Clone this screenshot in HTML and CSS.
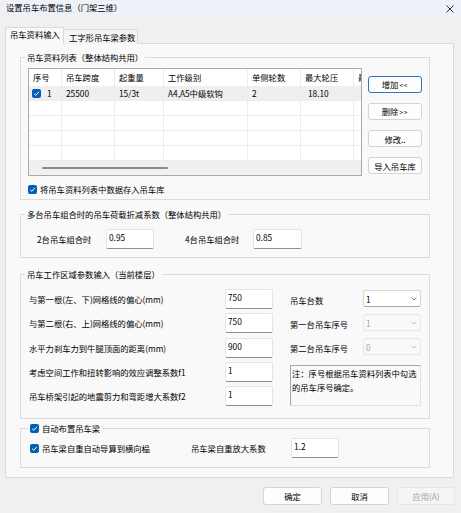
FILE: index.html
```html
<!DOCTYPE html>
<html lang="zh-CN">
<head>
<meta charset="utf-8">
<title>设置吊车布置信息</title>
<link rel="stylesheet" href="styles.css">
</head>
<body>
<div class="titlebar">
  <span class="title">设置吊车布置信息（门架三维）</span>
  <svg class="close" width="8" height="8" viewBox="0 0 8 8"><path d="M0.5 0.5 L7.5 7.5 M7.5 0.5 L0.5 7.5" stroke="#1a1a1a" stroke-width="0.9" fill="none"/></svg>
</div>
<div class="tabs">
  <div class="tab active">吊车资料输入</div>
  <div class="tab second">工字形吊车梁参数</div>
</div>
<div class="panel">
  <fieldset class="group g1">
    <legend>吊车资料列表（整体结构共用）</legend>
    <div class="list-row">
      <div class="grid">
        <div class="row head">
          <div class="cell c1">序号</div><div class="cell c2">吊车跨度</div><div class="cell c3">起重量</div><div class="cell c4">工作级别</div><div class="cell c5">单侧轮数</div><div class="cell c6">最大轮压</div><div class="cell c7">最小轮压</div>
        </div>
        <div class="row sel-row">
          <div class="cell c1 first"><svg class="cb" width="9" height="9" viewBox="0 0 9 9"><rect width="9" height="9" rx="2" fill="#005fb8"/><path d="M2.1 4.7 L3.8 6.3 L6.9 2.8" stroke="#fff" stroke-width="1" fill="none"/></svg><span>1</span></div><div class="cell c2">25500</div><div class="cell c3">15/3t</div><div class="cell c4">A4,A5中级软钩</div><div class="cell c5">2</div><div class="cell c6 num">18.10</div><div class="cell c7"></div>
        </div>
        <div class="row"><div class="cell c1"></div><div class="cell c2"></div><div class="cell c3"></div><div class="cell c4"></div><div class="cell c5"></div><div class="cell c6"></div><div class="cell c7"></div></div>
        <div class="row"><div class="cell c1"></div><div class="cell c2"></div><div class="cell c3"></div><div class="cell c4"></div><div class="cell c5"></div><div class="cell c6"></div><div class="cell c7"></div></div>
        <div class="row"><div class="cell c1"></div><div class="cell c2"></div><div class="cell c3"></div><div class="cell c4"></div><div class="cell c5"></div><div class="cell c6"></div><div class="cell c7"></div></div>
        <div class="row"><div class="cell c1"></div><div class="cell c2"></div><div class="cell c3"></div><div class="cell c4"></div><div class="cell c5"></div><div class="cell c6"></div><div class="cell c7"></div></div>
        <div class="hscroll"><div class="thumb"></div></div>
      </div>
      <div class="side">
        <div class="btn focus"><span class="btxt">增加<span class="arr">&lt;&lt;</span></span></div>
        <div class="btn"><span class="btxt">删除<span class="arr">&gt;&gt;</span></span></div>
        <div class="btn"><span class="btxt">修改..</span></div>
        <div class="btn"><span class="btxt">导入吊车库</span></div>
      </div>
    </div>
    <div class="check store">
      <svg class="cb" width="9" height="9" viewBox="0 0 9 9"><rect width="9" height="9" rx="2" fill="#005fb8"/><path d="M2.1 4.7 L3.8 6.3 L6.9 2.8" stroke="#fff" stroke-width="1" fill="none"/></svg>
      <span>将吊车资料列表中数据存入吊车库</span>
    </div>
  </fieldset>

  <fieldset class="group g2">
    <legend>多台吊车组合时的吊车荷载折减系数（整体结构共用）</legend>
    <div class="g2row">
      <span class="lbl2">2台吊车组合时</span>
      <div class="tb w48">0.95</div>
      <span class="lbl4">4台吊车组合时</span>
      <div class="tb w49">0.85</div>
    </div>
  </fieldset>

  <fieldset class="group g3">
    <legend>吊车工作区域参数输入（当前楼层）</legend>
    <div class="g3body">
      <div class="col-left">
        <div class="frow"><span>与第一根(左、下)网格线的偏心(mm)</span><div class="tb w48">750</div></div>
        <div class="frow"><span>与第二根(右、上)网格线的偏心(mm)</span><div class="tb w48">750</div></div>
        <div class="frow"><span>水平力刹车力到牛腿顶面的距离(mm)</span><div class="tb w48">900</div></div>
        <div class="frow"><span>考虑空间工作和扭转影响的效应调整系数f1</span><div class="tb w48">1</div></div>
        <div class="frow"><span>吊车桥架引起的地震剪力和弯距增大系数f2</span><div class="tb w48">1</div></div>
      </div>
      <div class="col-right">
        <div class="srow"><span class="slbl">吊车台数</span><div class="sel"><span>1</span><svg width="6" height="4" viewBox="0 0 6 4"><path d="M0.5 0.5 L3 3 L5.5 0.5" stroke="#5a5a5a" stroke-width="0.8" fill="none"/></svg></div></div>
        <div class="srow"><span class="slbl">第一台吊车序号</span><div class="sel disabled"><span>1</span><svg width="6" height="4" viewBox="0 0 6 4"><path d="M0.5 0.5 L3 3 L5.5 0.5" stroke="#b5b5b5" stroke-width="0.8" fill="none"/></svg></div></div>
        <div class="srow"><span class="slbl">第二台吊车序号</span><div class="sel disabled"><span>0</span><svg width="6" height="4" viewBox="0 0 6 4"><path d="M0.5 0.5 L3 3 L5.5 0.5" stroke="#b5b5b5" stroke-width="0.8" fill="none"/></svg></div></div>
        <div class="note">注：序号根据吊车资料列表中勾选的吊车序号确定。</div>
      </div>
    </div>
  </fieldset>

  <fieldset class="group g4">
    <legend><svg class="cb" width="9" height="9" viewBox="0 0 9 9"><rect width="9" height="9" rx="2" fill="#005fb8"/><path d="M2.1 4.7 L3.8 6.3 L6.9 2.8" stroke="#fff" stroke-width="1" fill="none"/></svg><span>自动布置吊车梁</span></legend>
    <div class="g4row">
      <div class="check auto">
        <svg class="cb" width="9" height="9" viewBox="0 0 9 9"><rect width="9" height="9" rx="2" fill="#005fb8"/><path d="M2.1 4.7 L3.8 6.3 L6.9 2.8" stroke="#fff" stroke-width="1" fill="none"/></svg>
        <span>吊车梁自重自动导算到横向榀</span>
      </div>
      <span class="lbl-f">吊车梁自重放大系数</span>
      <div class="tb w48">1.2</div>
    </div>
  </fieldset>
</div>
<div class="footer">
  <div class="fbtn w59">确定</div>
  <div class="fbtn w59">取消</div>
  <div class="fbtn w58 disabled">应用(A)</div>
</div>
</body>
</html>
```
FILE: styles.css
```css
* { box-sizing: border-box; }
html, body { margin: 0; padding: 0; }
body {
  width: 461px;
  height: 513px;
  overflow: hidden;
  background: #f0f0f0;
  color: #000;
  font-family: "Noto Sans CJK SC", "Noto Sans", sans-serif;
  font-size: 8.3px;
  line-height: 12px;
}

.titlebar {
  height: 19px;
  background: #eef2f8;
  display: flex;
  justify-content: space-between;
  align-items: flex-start;
  padding: 1px 7px 0 6px;
}
.close { margin-top: 4px; }

.tabs {
  display: flex;
  align-items: flex-end;
  margin: 8px 0 -1px 5px;
  height: 17px;
}
.tab {
  height: 15px;
  border: 1px solid #dadada;
  border-bottom: none;
  background: #f4f4f4;
  padding: 1px 0 0 5px;
  white-space: nowrap;
}
.tab.active {
  position: relative;
  z-index: 1;
  width: 59px;
  height: 17px;
  padding: 0 0 0 4px;
  background: #f9f9f9;
}
.tab.second { width: 74px; border-left: none; }

.panel {
  margin-left: 5px;
  width: 449px;
  height: 435px;
  background: #f9f9f9;
  border: 1px solid #dadada;
  padding: 7px 0 0 14px;
}

.group {
  width: 410px;
  margin: 0;
  min-width: 0;
  border: 1px solid #dcdcdc;
}
.group legend {
  padding: 0 2px;
  line-height: 12px;
}
.g1 { padding: 5px 7px 4px 7px; }
.g1 legend { margin-left: -3px; }
.g2 { margin-top: 8px; padding: 9px 16px 8px 16px; }
.g2 legend { margin-left: -12px; }
.g3 { margin-top: 10px; padding: 9px 8px 12px 8px; }
.g3 legend { margin-left: -4px; }
.g4 { margin-top: 3px; padding: 4px 9px 9px 9px; }
.g4 legend { margin-left: -2px; display: flex; align-items: center; }
.g4 legend .cb { margin-right: 3px; }

.cb { display: block; flex: none; }

/* list */
.list-row { display: flex; gap: 6px; }
.grid {
  width: 334px;
  height: 108px;
  border: 1px solid #a9a9a9;
  background: #fff;
  overflow: hidden;
  display: flex;
  flex-direction: column;
}
.row {
  display: flex;
  flex: none;
  height: 15px;
  border-bottom: 1px solid #ececec;
}
.row.head { height: 17px; border-bottom: none; }
.row.sel-row { background: #efefef; }
.cell {
  flex: none;
  height: 100%;
  border-right: 1px solid #ececec;
  padding-left: 4px;
  white-space: nowrap;
  overflow: hidden;
  line-height: 14px;
}
.head .cell { line-height: 17px; }
.c1 { width: 33px; }
.c2 { width: 53px; }
.c3 { width: 49px; }
.c4 { width: 84px; }
.c5 { width: 53px; }
.c6 { width: 53px; }
.c7 { width: 40px; border-right: none; }
.cell.first { display: flex; align-items: center; padding-left: 3px; }
.cell.first .cb { margin-right: 6px; }
.cell.num { padding-left: 7px; }
.hscroll {
  flex: 1;
  background: #f0f0f0;
  display: flex;
  align-items: center;
  padding-left: 13px;
}
.thumb {
  width: 126px;
  height: 2px;
  border-radius: 1px;
  background: #8a8a8a;
}

.side {
  display: flex;
  flex-direction: column;
  gap: 10px;
  margin-top: 8px;
}
.btn {
  width: 54px;
  height: 17px;
  border: 1px solid #d3d3d3;
  border-radius: 3px;
  background: #fdfdfd;
  display: flex;
  align-items: center;
  justify-content: center;
}
.btxt { white-space: nowrap; line-height: 12px; }
.arr { font-size: 6.5px; letter-spacing: 0.8px; margin-left: 1px; }
.btn.focus { border-color: #2f74c0; }

.check {
  display: flex;
  align-items: center;
  gap: 3px;
  height: 12px;
  white-space: nowrap;
}
.check.store { margin-top: 7px; }

/* text box */
.tb {
  flex: none;
  height: 20px;
  background: #fff;
  border: 1px solid #e4e4e4;
  border-bottom-color: #8e8e8e;
  border-radius: 2px;
  padding: 1px 2px;
  line-height: 12px;
}
.w48 { width: 48px; }
.w49 { width: 49px; }

.g2row { display: flex; align-items: center; height: 20px; }
.lbl2 { width: 69px; }
.lbl4 { width: 68px; margin-left: 31px; }

.g3body { display: flex; gap: 17px; }
.col-left {
  width: 244px;
  display: flex;
  flex-direction: column;
  gap: 4.25px;
}
.frow {
  display: flex;
  align-items: center;
  justify-content: space-between;
  height: 20px;
  white-space: nowrap;
}
.col-right {
  width: 131px;
  display: flex;
  flex-direction: column;
  gap: 7px;
  margin-top: 1px;
}
.srow { display: flex; align-items: center; height: 17px; }
.slbl { width: 73px; padding-top: 3px; white-space: nowrap; }
.sel {
  width: 58px;
  height: 17px;
  border: 1px solid #d6d6d6;
  border-bottom-color: #a8a8a8;
  border-radius: 3px;
  background: #fff;
  display: flex;
  align-items: center;
  justify-content: space-between;
  padding: 0 3px 0 2px;
}
.sel.disabled {
  background: #f9f9f9;
  border-color: #e6e6e6;
  color: #a3a3a3;
}
.note {
  margin-top: 3px;
  height: 41px;
  border: 1px solid;
  border-color: #a6a6a6 #e2e2e2 #e2e2e2 #a6a6a6;
  padding: 0 0 0 1px;
  line-height: 14px;
}

.g4row { display: flex; align-items: center; height: 20px; }
.check.auto { width: 161px; }
.lbl-f { width: 100px; white-space: nowrap; }

.footer {
  display: flex;
  justify-content: flex-end;
  gap: 8px;
  margin-top: 9px;
  padding-right: 6px;
}
.fbtn {
  height: 18px;
  border: 1px solid #d3d3d3;
  border-radius: 3px;
  background: #fdfdfd;
  display: flex;
  align-items: center;
  justify-content: center;
}
.w59 { width: 59px; }
.w58 { width: 58px; }
.fbtn.disabled { background: #f5f5f5; border-color: #e6e6e6; color: #a3a3a3; }
```
